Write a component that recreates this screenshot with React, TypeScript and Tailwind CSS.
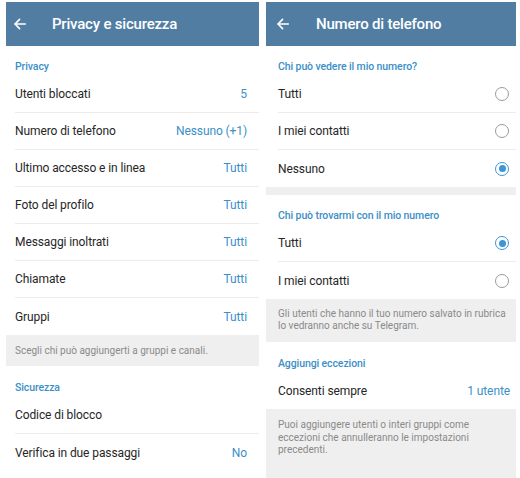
import React from "react";

const BLUE = "text-[#3b8fc8]";

function Header({ title, arrowW, gap }: { title: string; arrowW: string; gap: string }) {
  return (
    <div className="h-[44px] bg-[#527da3] flex items-center text-white shrink-0">
      <div className={`${arrowW} flex justify-center`}>
        <svg width="14" height="14" viewBox="0 0 16 16" fill="none" stroke="white" strokeWidth="1.9" strokeLinecap="round" strokeLinejoin="round">
          <path d="M14 8H2.5" />
          <path d="M7.5 2.8L2.3 8l5.2 5.2" />
        </svg>
      </div>
      <div className={`${gap} text-[15px] font-medium tracking-[-0.2px]`}>{title}</div>
    </div>
  );
}

function SectionTitle({ title }: { title: string }) {
  return <div className={`text-[10.5px] leading-[14px] font-medium tracking-[-0.1px] ${BLUE}`}>{title}</div>;
}

function Row({ label, value, divider = true, px = "pl-[9px] pr-[12px]" }: { label: string; value?: string; divider?: boolean; px?: string }) {
  return (
    <div className="h-[37px] flex flex-col shrink-0">
      <div className={`flex-1 flex items-center justify-between ${px}`}>
        <span className="text-[12px] tracking-[-0.1px] text-[#262626]">{label}</span>
        {value && <span className={`text-[12px] tracking-[-0.1px] ${BLUE}`}>{value}</span>}
      </div>
      {divider && <div className="h-px bg-[#ececec] ml-[9px]" />}
    </div>
  );
}

function Radio({ checked }: { checked?: boolean }) {
  return checked ? (
    <div className="w-[14px] h-[14px] rounded-full border-[1.5px] border-[#3d95d6] flex items-center justify-center">
      <div className="w-[7px] h-[7px] rounded-full bg-[#3d95d6]" />
    </div>
  ) : (
    <div className="w-[14px] h-[14px] rounded-full border-[1.5px] border-[#9a9a9a]" />
  );
}

function RadioRow({ label, checked, divider = true }: { label: string; checked?: boolean; divider?: boolean }) {
  return (
    <div className="h-[37px] flex flex-col shrink-0">
      <div className="flex-1 flex items-center justify-between pl-[12px] pr-[7px]">
        <span className="text-[12px] tracking-[-0.1px] text-[#262626]">{label}</span>
        <Radio checked={checked} />
      </div>
      {divider && <div className="h-px bg-[#ececec] ml-[12px]" />}
    </div>
  );
}

function Info({ children, cls }: { children: React.ReactNode; cls: string }) {
  return <div className={`bg-[#efefef] text-[10px] text-[#8a8a8a] shrink-0 ${cls}`}>{children}</div>;
}

export default function App() {
  return (
    <div className="w-[520px] h-[478px] bg-white overflow-hidden flex pt-[2px]" style={{ fontFamily: "Roboto, 'Noto Sans', sans-serif" }}>
      <div className="w-[253px] ml-[6px] flex flex-col">
        <Header title="Privacy e sicurezza" arrowW="w-[28px]" gap="ml-[18px]" />
        <div className="h-[30px] pt-[14px] px-[9px] shrink-0">
          <SectionTitle title="Privacy" />
        </div>
        <Row label="Utenti bloccati" value="5" />
        <Row label="Numero di telefono" value="Nessuno (+1)" />
        <Row label="Ultimo accesso e in linea" value="Tutti" />
        <Row label="Foto del profilo" value="Tutti" />
        <Row label="Messaggi inoltrati" value="Tutti" />
        <Row label="Chiamate" value="Tutti" />
        <Row label="Gruppi" value="Tutti" divider={false} />
        <Info cls="h-[31px] px-[9px] flex items-center leading-[12px]">Scegli chi può aggiungerti a gruppi e canali.</Info>
        <div className="h-[31px] pt-[15px] px-[9px] shrink-0">
          <SectionTitle title="Sicurezza" />
        </div>
        <Row label="Codice di blocco" />
        <Row label="Verifica in due passaggi" value="No" divider={false} />
      </div>
      <div className="w-[250px] ml-[7px] flex flex-col">
        <Header title="Numero di telefono" arrowW="w-[34px]" gap="ml-[16px]" />
        <div className="h-[30px] pt-[14px] px-[12px] shrink-0">
          <SectionTitle title="Chi può vedere il mio numero?" />
        </div>
        <RadioRow label="Tutti" />
        <RadioRow label="I miei contatti" />
        <RadioRow label="Nessuno" checked divider={false} />
        <div className="h-[8px] bg-[#efefef] shrink-0" />
        <div className="h-[30px] pt-[14px] px-[12px] shrink-0">
          <SectionTitle title="Chi può trovarmi con il mio numero" />
        </div>
        <RadioRow label="Tutti" checked />
        <RadioRow label="I miei contatti" divider={false} />
        <Info cls="h-[43px] pl-[12px] pr-[2px] pt-[9px] leading-[12px]">
          Gli utenti che hanno il tuo numero salvato in rubrica lo vedranno anche su Telegram.
        </Info>
        <div className="h-[30px] pt-[15px] px-[12px] shrink-0">
          <SectionTitle title="Aggiungi eccezioni" />
        </div>
        <Row label="Consenti sempre" value="1 utente" divider={false} px="pl-[12px] pr-[6px]" />
        <Info cls="flex-1 pl-[12px] pr-[20px] pt-[10px] leading-[12.5px]">
          Puoi aggiungere utenti o interi gruppi come eccezioni che annulleranno le impostazioni precedenti.
        </Info>
      </div>
    </div>
  );
}
